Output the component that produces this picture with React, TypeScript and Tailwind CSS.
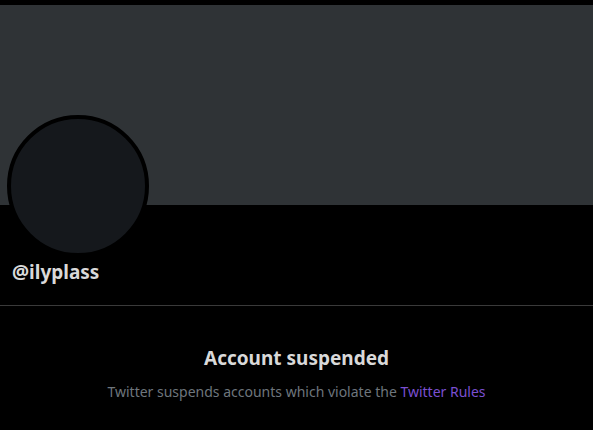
export default function App() {
  return (
    <div
      className="w-[593px] h-[430px] bg-black overflow-hidden"
      style={{ fontFamily: '"Noto Sans", "Segoe UI", sans-serif' }}
    >
      <div className="h-[5px] bg-black" />
      {/* header banner */}
      <div className="h-[200px] bg-[#2f3336]" />

      {/* profile head */}
      <div className="px-[7px] border-b border-[#3a3a3a] pb-[21px]">
        <div className="-mt-[90px] w-[142px] h-[142px] rounded-full bg-[#15181c] border-[4px] border-black" />
        <div className="mt-[3px] pl-[5px] text-[19px] leading-[24px] font-bold text-[#d9d9d9]">
          @ilyplass
        </div>
      </div>

      <div className="flex flex-col items-center pt-[40px]">
        <h2 className="text-[19px] leading-[24px] font-bold text-[#d9d9d9]">
          Account suspended
        </h2>
        <p className="mt-[12px] text-[14px] leading-[20px] text-[#6e767d]">
          Twitter suspends accounts which violate the{" "}
          <a href="#" className="text-[#7b4fd1]">
            Twitter Rules
          </a>
        </p>
      </div>
    </div>
  );
}
